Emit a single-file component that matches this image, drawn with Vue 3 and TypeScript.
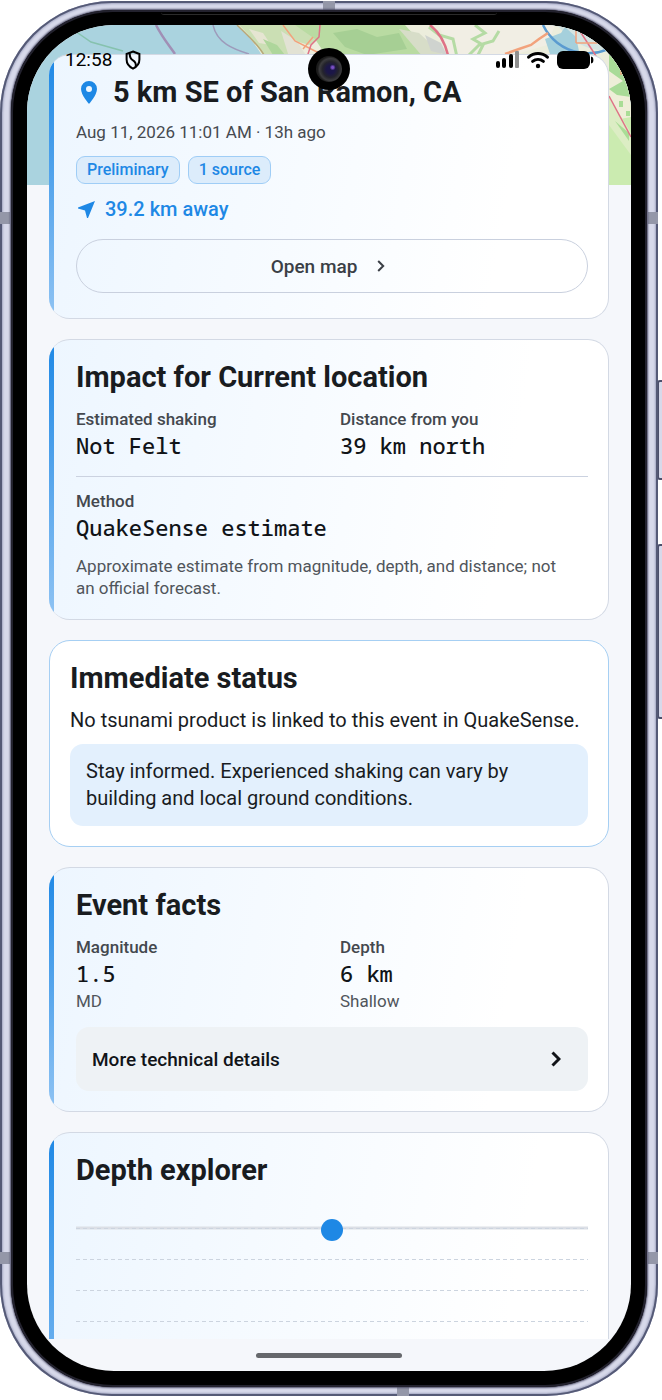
<script setup lang="ts">
interface Fact {
  label: string
  value: string
  note?: string
}

const impact: Fact[] = [
  { label: 'Estimated shaking', value: 'Not Felt' },
  { label: 'Distance from you', value: '39 km north' },
]

const facts: Fact[] = [
  { label: 'Magnitude', value: '1.5', note: 'MD' },
  { label: 'Depth', value: '6 km', note: 'Shallow' },
]

const tags: string[] = ['Preliminary', '1 source']
const depthLines: number[] = [27, 58, 89, 120]
</script>

<template>
  <div class="device">
    <span class="key key-power"></span>
    <span class="key key-volume"></span>
    <div class="shell">
      <span class="band band-top"></span>
      <span class="band band-bottom"></span>
      <span class="band band-left-upper"></span>
      <span class="band band-left-lower"></span>
      <span class="band band-right-upper"></span>
      <span class="band band-right-lower"></span>
      <div class="bezel">
        <span class="speaker"></span>
        <div class="screen">
          <div class="status-bar">
            <span class="clock">12:58</span>
            <svg class="shield" viewBox="0 0 16 20" aria-hidden="true">
              <path d="M8 1.500 14.400 4V9.600C14.400 13.800 11.600 17 8 18.600 4.400 17 1.600 13.800 1.600 9.600V4Z" />
              <path d="M4.800 3.200C4.400 7.500 5.600 9 8 10.400 10.400 11.800 11.200 13.200 10.800 16.600" />
            </svg>
            <span class="status-gap"></span>
            <svg class="signal" viewBox="0 0 23 18" aria-hidden="true">
              <rect x="0" y="10" width="4" height="7" rx="2" />
              <rect x="6" y="7" width="4" height="10" rx="2" />
              <rect x="13" y="3" width="4" height="14" rx="2" />
              <rect class="weak" x="19" y="0" width="4" height="17" rx="1" />
            </svg>
            <svg class="wifi" viewBox="0 0 22 18" aria-hidden="true">
              <path d="M1.6 6.2A14 14 0 0 1 20.4 6.2" />
              <path d="M5.6 10.4A8.4 8.4 0 0 1 16.4 10.4" />
              <circle cx="11" cy="15" r="2.2" />
            </svg>
            <svg class="battery" viewBox="0 0 37 18" aria-hidden="true">
              <rect x="0" y="0" width="33" height="18" rx="6" />
              <path d="M34 5.5C35.8 5.8 36.4 7 36.4 9S35.8 12.2 34 12.500Z" />
            </svg>
          </div>
          <div class="camera"><span class="lens"></span></div>

          <main class="content">
            <svg class="map" viewBox="0 0 604 160" preserveAspectRatio="xMidYMin slice" aria-hidden="true">
              <rect width="604" height="160" fill="#aad3df" />
              <path d="M210 0H604V160H520L236 32Q224 12 210 0Z" fill="#eceddc" />
              <path d="M212 0H300L296 12 282 20 262 14 268 32H237Q226 13 212 0Z" fill="#cbdfb4" />
              <path d="M268 0H378L398 22 392 32H300L288 14Z" fill="#b9dba2" />
              <path d="M306 8 330 4 350 12 372 8 380 24 340 30 318 22Z" fill="#a6cf94" />
              <path d="M222 4 236 8 244 20 232 18Z" fill="#e6e5d2" />
              <path d="M254 6 270 16 280 32H262Z" fill="#e2e2d4" />
              <path d="M236 14 250 20 258 30 246 30Z" fill="#aed69b" />
              <path d="M372 4 392 8 418 32H396L384 18Z" fill="#d7ddc8" />
              <path d="M398 10 414 18 420 30 404 26Z" fill="#cfd3cf" />
              <path d="M412 0H528L520 20 480 32H424Z" fill="#f1eee4" />
              <path d="M402 2 412 10 426 14 430 32M448 0 458 8 446 14 456 20 450 32M440 32 452 20 466 16 472 6" class="wood" />
              <path d="M530 0H604V22Q560 36 530 0Z" fill="#d3e4e2" />
              <path d="M518 14 534 8 538 2 549 12 552 26 540 32H524Z" fill="#a5d0dc" />
              <path d="M516 0A50 50 0 0 0 598 12" fill="none" stroke="#5b9bd0" stroke-width="2.500" />
              <path d="M582 80H604V160H582Z" fill="#cbebb0" />
              <path d="M582 30H604V92L582 96Z" fill="#eeeed8" />
              <path d="M582 28 604 38V72L590 70 582 64 596 56 582 46Z" fill="#a9db98" />
              <path d="M582 72 604 108V130L582 100Z" fill="#dcedc4" />
              <path d="M592 76h4v6h-4zM599 86h4v5h-4zM588 96l14 12v8z" fill="#a9dd96" />
              <path d="M129 0C135 12 141 19 148 29" fill="none" stroke="#a08fb5" stroke-width="2.500" />
              <path d="M186 0C190 18 206 24 222 29" fill="none" stroke="#9d9bbb" stroke-width="1.500" />
              <path d="M48 6 64 17 96 26" fill="none" stroke="#86c2ae" stroke-width="1.500" />
              <path d="M210 0C220 10 230 18 237 30" fill="none" stroke="#b8a878" stroke-width="1.500" />
              <path d="M256 0 268 16 284 24 292 28M276 24 286 12" class="road orange" />
              <path d="M293 0 292 12 284 20 280 32" class="road red" />
              <path d="M403 0Q416 10 421 30" class="road red wide" />
              <path d="M478 29 492 24 504 20 512 14 521 8" class="road orange wide" />
              <path d="M549 0 569 31" class="road red" />
              <path d="M549 18H594V50M549 6V18" class="road orange" />
              <path d="M582 71 604 112" class="road red" />
            </svg>

            <section class="card accent">
              <div class="place">
                <svg class="pin" viewBox="0 0 16 23" aria-hidden="true">
                  <path d="M8 0A8 8 0 0 0 0 8C0 14 8 23 8 23S16 14 16 8A8 8 0 0 0 8 0ZM8 5A3 3 0 1 1 8 11 3 3 0 0 1 8 5Z" />
                </svg>
                <h1>5 km SE of San Ramon, CA</h1>
              </div>
              <p class="when">Aug 11, 2026 11:01 AM · 13h ago</p>
              <ul class="tags">
                <li v-for="tag in tags" :key="tag">{{ tag }}</li>
              </ul>
              <p class="away">
                <svg viewBox="0 0 17 17" aria-hidden="true"><path d="M17 0 10 17H9L7 9.500 0 7.500V6.500Z" /></svg>
                39.2 km away
              </p>
              <button type="button" class="open-map">
                Open map
                <svg viewBox="0 0 24 24" aria-hidden="true"><path d="M9.200 7 14.200 12 9.200 17" /></svg>
              </button>
            </section>

            <section class="card accent">
              <h2>Impact for Current location</h2>
              <dl class="facts">
                <div v-for="item in impact" :key="item.label">
                  <dt>{{ item.label }}</dt>
                  <dd>{{ item.value }}</dd>
                </div>
              </dl>
              <dl class="method">
                <dt>Method</dt>
                <dd>QuakeSense estimate</dd>
              </dl>
              <p class="small caveat">Approximate estimate from magnitude, depth, and distance; not an official forecast.</p>
            </section>

            <section class="card status">
              <h2>Immediate status</h2>
              <p>No tsunami product is linked to this event in QuakeSense.</p>
              <p class="advice">Stay informed. Experienced shaking can vary by building and local ground conditions.</p>
            </section>

            <section class="card accent">
              <h2>Event facts</h2>
              <dl class="facts">
                <div v-for="item in facts" :key="item.label">
                  <dt>{{ item.label }}</dt>
                  <dd>{{ item.value }}</dd>
                  <dd class="small unit">{{ item.note }}</dd>
                </div>
              </dl>
              <button type="button" class="more">
                More technical details
                <svg viewBox="0 0 10 16" aria-hidden="true"><path d="M1.500 1.500 8 8 1.500 14.500" /></svg>
              </button>
            </section>

            <section class="card accent">
              <h2>Depth explorer</h2>
              <svg class="depth" role="img" aria-label="Depth chart">
                <line class="surface" x1="0" x2="100%" y1="26" y2="26" />
                <line v-for="y in depthLines" :key="y" class="tick" x1="0" x2="100%" :y1="y - 0.5" :y2="y - 0.5" />
                <circle cx="50%" cy="28" r="11" />
              </svg>
            </section>
          </main>

          <div class="nav-bar"><span></span></div>
        </div>
      </div>
    </div>
  </div>
</template>

<style>
body {
  margin: 0;
  background: #ffffff;
}
</style>

<style scoped>
* {
  box-sizing: border-box;
}

.device {
  position: relative;
  height: 100vh;
  padding: 1px 4px 4px 0;
  overflow: hidden;
  background: #ffffff;
  color: #191c1f;
  font-family: Roboto, "Liberation Sans", sans-serif;
}

.shell {
  position: relative;
  height: 100%;
  padding: 9px 11px;
  border-radius: 112px;
  background: #d7d9ea;
  box-shadow:
    inset 0 0 0 2px #555a76,
    inset 0 0 2px 3px #a3a7c2;
}

.bezel {
  position: relative;
  height: 100%;
  padding: 15px 16px 16px;
  border-radius: 102px;
  background: #000000;
  box-shadow: 0 0 2px 1px #4c4c66;
}

.bezel::before {
  content: "";
  position: absolute;
  inset: 0;
  border: 2px solid #23222e;
  border-radius: 102px;
}

.speaker {
  position: absolute;
  top: 2px;
  left: 50%;
  width: 336px;
  height: 3px;
  margin-left: -168px;
  border-radius: 0 0 4px 4px;
  border-bottom: 1px solid #2b2b2b;
}

.band {
  position: absolute;
  background: #9497a8;
}

.band-top,
.band-bottom {
  width: 12px;
  height: 9px;
}

.band-top {
  top: 0;
  left: 323px;
}

.band-bottom {
  bottom: 0;
  right: 249px;
}

.band-left-upper,
.band-left-lower,
.band-right-upper,
.band-right-lower {
  width: 10px;
  height: 12px;
}

.band-left-upper,
.band-right-upper {
  top: 211px;
}

.band-left-lower,
.band-right-lower {
  bottom: 132px;
}

.band-left-upper,
.band-left-lower {
  left: 0;
}

.band-right-upper,
.band-right-lower {
  right: 0;
}

.key {
  position: absolute;
  right: -4px;
  width: 9px;
  border: 2px solid #4c4f6b;
  border-radius: 3px;
  background: #d7d9ea;
}

.key-power {
  top: 380px;
  height: 100px;
}

.key-volume {
  top: 544px;
  height: 175px;
}

.screen {
  position: relative;
  display: flex;
  flex-direction: column;
  height: 100%;
  overflow: hidden;
  border-radius: 87px;
  background: #f5f7fb;
}

.status-bar {
  position: absolute;
  z-index: 2;
  top: 24px;
  left: 38px;
  right: 37px;
  display: flex;
  align-items: center;
  height: 22px;
  color: #000000;
}

.clock {
  width: 59px;
  font-size: 19px;
  line-height: 22px;
}

.status-gap {
  flex: 1;
}

.shield {
  width: 18px;
  height: 20px;
  fill: none;
  stroke: #000000;
  stroke-width: 2;
}

.signal {
  width: 23px;
  height: 18px;
}

.signal .weak {
  fill: #8f8f8f;
}

.wifi {
  width: 22px;
  height: 18px;
  margin: 0 8px;
}

.wifi path {
  fill: none;
  stroke: #000000;
  stroke-width: 3;
  stroke-linecap: round;
}

.battery {
  width: 37px;
  height: 18px;
}

.camera {
  position: absolute;
  z-index: 3;
  top: 23px;
  left: 50%;
  display: grid;
  place-items: center;
  width: 42px;
  height: 42px;
  margin-left: -21px;
  border-radius: 50%;
  background: #000000;
}

.lens {
  width: 26px;
  height: 26px;
  border-radius: 50%;
  background:
    radial-gradient(circle at 64% 44%, #7a4fc4 0 1px, transparent 3px),
    radial-gradient(circle at 56% 52%, #1b1648 0 4px, #24242c 8px, #3c3c3e 11px, #1c1c1c 13px);
}

.content {
  position: relative;
  display: flex;
  flex: 1;
  flex-direction: column;
  gap: 20px;
  min-height: 0;
  padding: 29px 22px 0;
  overflow: hidden;
}

.map {
  position: absolute;
  top: 0;
  left: 0;
  width: 100%;
  height: 160px;
}

.wood {
  fill: none;
  stroke: #b5dba4;
  stroke-width: 3;
}

.road {
  fill: none;
  stroke-width: 1.5;
}

.wide {
  stroke-width: 2.5;
}

.orange {
  stroke: #f2a27c;
}

.red {
  stroke: #df7186;
}

.card {
  position: relative;
  flex: none;
  padding: 17px 20px 20px;
  overflow: hidden;
  border: 1px solid #d3d9e4;
  border-radius: 21px;
  background: #ffffff;
}

.accent {
  padding-left: 27px;
  border-left: 0;
  background: linear-gradient(100deg, #edf6ff 0%, #f7fbff 45%, #ffffff 80%);
}

.accent::before {
  content: "";
  position: absolute;
  top: 0;
  bottom: 0;
  left: 0;
  width: 5px;
  background: linear-gradient(#1e88e5, #8fc3f3);
}

h1,
h2,
p,
ul,
dl,
dd {
  margin: 0;
  padding: 0;
}

h1,
h2 {
  font-size: 29px;
  font-weight: 700;
  line-height: 40px;
  white-space: nowrap;
}

.place {
  display: flex;
  align-items: center;
  gap: 16px;
  padding-left: 5px;
}

.pin {
  width: 16px;
  height: 23px;
  fill: #1e88e5;
  fill-rule: evenodd;
}

.when {
  margin-top: 8px;
  color: #464a50;
  font-size: 17px;
  line-height: 24px;
}

.tags {
  display: flex;
  gap: 8px;
  margin-top: 12px;
  list-style: none;
}

.tags li {
  padding: 0 10px;
  border: 1px solid #9fcdf6;
  border-radius: 9px;
  background: #dcecfb;
  color: #1e88e5;
  font-size: 16px;
  font-weight: 500;
  line-height: 26px;
}

.away {
  display: flex;
  align-items: center;
  gap: 10px;
  margin-top: 12px;
  padding-left: 2px;
  color: #1e88e5;
  font-size: 20px;
  font-weight: 500;
  line-height: 26px;
}

.away svg {
  width: 17px;
  height: 17px;
  fill: #1e88e5;
}

button {
  display: flex;
  align-items: center;
  width: 100%;
  font-family: inherit;
  font-size: 19px;
  font-weight: 500;
}

button svg {
  fill: none;
  stroke: currentColor;
}

.open-map {
  justify-content: center;
  gap: 12px;
  height: 54px;
  margin: 17px 0 5px;
  border: 1px solid #c9d0de;
  border-radius: 27px;
  background: transparent;
  color: #3b3f46;
}

.open-map svg {
  width: 24px;
  height: 24px;
  stroke-width: 2;
}

.facts {
  display: grid;
  grid-template-columns: 1fr 1fr;
  gap: 16px;
  margin-top: 12px;
}

dt {
  color: #44484e;
  font-size: 17px;
  font-weight: 500;
  line-height: 21px;
}

dd {
  color: #111418;
  font-family: "Noto Sans Mono", "DejaVu Sans Mono", monospace;
  font-size: 22px;
  font-weight: 500;
  line-height: 30px;
}

.small {
  color: #50555b;
  font-family: inherit;
  font-size: 17px;
  font-weight: 400;
  line-height: 22px;
}

.caveat {
  padding-right: 16px;
}

.unit {
  margin-top: 2px;
}

.method {
  margin: 16px 0 13px;
  padding-top: 14px;
  border-top: 1px solid #cbd2e0;
}

.status {
  border-color: #a6cff3;
}

.status p {
  margin-top: 8px;
  font-size: 20px;
  line-height: 28px;
}

.status .advice {
  margin-top: 10px;
  padding: 14px 16px;
  border-radius: 13px;
  background: #e3f0fd;
  line-height: 27px;
}

.more {
  justify-content: space-between;
  height: 64px;
  margin-top: 15px;
  padding: 0 27px 0 16px;
  border: 0;
  border-radius: 13px;
  background: #eef2f5;
  color: #111418;
}

.more svg {
  width: 10px;
  height: 16px;
  stroke-width: 3;
}

.depth {
  display: block;
  width: 100%;
  height: 240px;
  margin-top: 12px;
  overflow: visible;
}

.surface {
  stroke: #dcdfe6;
  stroke-width: 3;
}

.tick {
  stroke: #ccd4df;
  stroke-width: 1;
  stroke-dasharray: 4 3;
}

.depth circle {
  fill: #1e88e5;
}

.nav-bar {
  display: flex;
  flex: none;
  align-items: center;
  justify-content: center;
  height: 32px;
}

.nav-bar span {
  width: 146px;
  height: 5px;
  border-radius: 3px;
  background: #66686c;
}
</style>
